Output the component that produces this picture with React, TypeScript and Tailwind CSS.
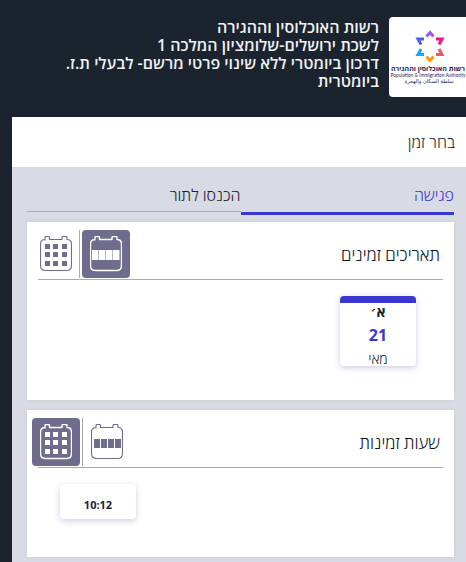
import { useState } from "react";

type View = "week" | "month";

function CalendarIcon({ view, active }: { view: View; active: boolean }) {
  const color = active ? "#ffffff" : "#6e6d8e";
  return (
    <svg width="32" height="36" viewBox="0 0 32 36" fill="none" aria-hidden="true">
      <path
        d="M5 4.5V1.5Q5 0.5 6 0.5H8.5Q9.5 0.5 9.5 1.5V3.5H22V1.5Q22 0.5 23 0.5H26Q27 0.5 27 1.5V3.5Q31.5 3.5 31.5 8V29.5Q31.5 34.5 26.5 34.5H5.5Q0.5 34.5 0.5 29.5V8Q0.5 3.5 5 3.5"
        stroke={color}
        strokeWidth={active ? 1.4 : 1.1}
        strokeLinejoin="round"
      />
      {view === "month"
        ? [8, 16, 25].map((y) =>
            [5, 13, 22].map((x) => (
              <rect key={`${x}-${y}`} x={x} y={y} width="5" height="5" fill={color} />
            ))
          )
        : active
          ? [2, 9, 16, 23].map((x) => (
              <rect key={x} x={x} y="14" width="6.5" height="10" fill={color} />
            ))
          : [3, 10, 17, 24].map((x) => (
              <rect key={x} x={x} y="15" width="6" height="9" fill={color} />
            ))}
    </svg>
  );
}

function ViewButton({
  view,
  active,
  onClick,
}: {
  view: View;
  active: boolean;
  onClick: () => void;
}) {
  const edge = view === "month" ? "border-r" : "border-l";
  return (
    <button
      type="button"
      aria-label={view === "month" ? "תצוגת חודש" : "תצוגת שבוע"}
      aria-pressed={active}
      onClick={onClick}
      className={`flex size-12 items-center justify-center ${
        active ? "rounded bg-[#6e6d8e]" : `${edge} border-[#acacac]`
      }`}
    >
      <CalendarIcon view={view} active={active} />
    </button>
  );
}

function Section({
  title,
  initial,
  className,
  children,
}: {
  title: string;
  initial: View;
  className: string;
  children: React.ReactNode;
}) {
  const [view, setView] = useState<View>(initial);
  return (
    <section className={`bg-white pt-2 shadow-[0_0_4px_rgba(0,0,0,0.08)] ${className}`}>
      <div className="mx-[11px] flex h-[50px] items-start justify-between border-b border-[#acacac]">
        <h2 className="pr-[3px] pt-[13px] text-[17px] font-light leading-6 text-[#10141c]">{title}</h2>
        <div className="-ml-1.5 flex gap-0.5">
          <ViewButton view="week" active={view === "week"} onClick={() => setView("week")} />
          <ViewButton view="month" active={view === "month"} onClick={() => setView("month")} />
        </div>
      </div>
      {children}
    </section>
  );
}

function Logo() {
  return (
    <div className="h-20 w-[77px] shrink-0 overflow-hidden rounded-l bg-white">
      <svg width="77" height="80" viewBox="0 0 77 80" role="img" aria-label="רשות האוכלוסין וההגירה">
        <g fill="none" strokeWidth="3" strokeLinejoin="miter">
          <path d="M37.5 19.5L41 15.5L44.5 19.5" stroke="#9b5cf6" />
          <path d="M47 22H53L50 27.5" stroke="#f0147f" />
          <path d="M50 32L53 37.5H47" stroke="#ef5661" />
          <path d="M44.5 39.5L41 43.5L37.5 39.5" stroke="#ff9800" />
          <path d="M35 37.5H29L32 32" stroke="#12aafa" />
          <path d="M32 27.5L29 22H35" stroke="#4c5cf0" />
        </g>
        <g fill="#25255c" textAnchor="middle" className="font-['Open_Sans','Noto_Sans','DejaVu_Sans',sans-serif]">
          <text x="39" y="54" fontSize="7" fontWeight="700" direction="rtl">
            רשות האוכלוסין וההגירה
          </text>
          <text x="39" y="60" fontSize="4.8" direction="ltr" className="font-['Lato',sans-serif]">
            Population &amp; Immigration Authority
          </text>
          <text x="40" y="66" fontSize="5.2" direction="rtl" className="font-['DejaVu_Sans',sans-serif]">
            سلطة السكان والهجرة
          </text>
        </g>
      </svg>
    </div>
  );
}

export default function App() {
  const [tab, setTab] = useState(0);
  return (
    <div
      dir="rtl"
      className="flex min-h-screen flex-col bg-[#1a232e] font-['Open_Sans','Noto_Sans','DejaVu_Sans',sans-serif]"
    >
      <header className="flex items-start gap-2.5 pb-5 pt-[17px]">
        <Logo />
        <h1 className="max-w-[320px] pt-px text-base font-semibold leading-[18px] text-[#f0f1f2]">
          רשות האוכלוסין וההגירה
          <br />
          לשכת ירושלים-שלומציון המלכה 1
          <br />
          דרכון ביומטרי ללא שינוי פרטי מרשם- לבעלי ת.ז. ביומטרית
        </h1>
      </header>
      <main className="ml-3 flex flex-1 flex-col bg-[#d8dbe3]">
        <div className="bg-white px-[11px] py-[13px] text-base font-light leading-6 text-[#1b232e]">
          בחר זמן
        </div>
        <div className="flex flex-col pb-[5px] pl-[15px] pr-3 pt-4">
          <div role="tablist" className="mb-[7px] flex">
            {["פגישה", "הכנסו לתור"].map((label, i) => (
              <button
                key={label}
                type="button"
                role="tab"
                aria-selected={tab === i}
                onClick={() => setTab(i)}
                className={`flex flex-1 items-start text-base font-light leading-6 ${
                  tab === i
                    ? "h-8 border-b-[3px] border-[#3b37d1] text-[#3b37d1]"
                    : "mb-[3px] h-[29px] border-b border-[#acacac] text-[#1b232e]"
                }`}
              >
                {label}
              </button>
            ))}
          </div>
          <Section title="תאריכים זמינים" initial="week" className="mb-2.5 pb-[34px]">
            <button
              type="button"
              className="mr-[38px] mt-4 flex h-[70px] w-[76px] flex-col items-center rounded border-t-[7px] border-[#3b37d1] bg-white text-[#1b232e] shadow-[0_2px_6px_rgba(60,55,160,0.25)]"
            >
              <span className="text-sm font-bold leading-[18px]">א׳</span>
              <span className="text-base font-bold leading-7 text-[#3b37d1]">21</span>
              <span className="text-sm font-light leading-5">מאי</span>
            </button>
          </Section>
          <Section title="שעות זמינות" initial="month" className="pb-[38px]">
            <div className="flex justify-end pl-[33px] pt-4">
              <button
                type="button"
                className="h-[35px] w-[76px] rounded bg-white pt-[7px] text-[11px] font-bold text-[#1b232e] shadow-[0_2px_6px_rgba(60,55,160,0.25)]"
              >
                10:12
              </button>
            </div>
          </Section>
        </div>
      </main>
    </div>
  );
}
